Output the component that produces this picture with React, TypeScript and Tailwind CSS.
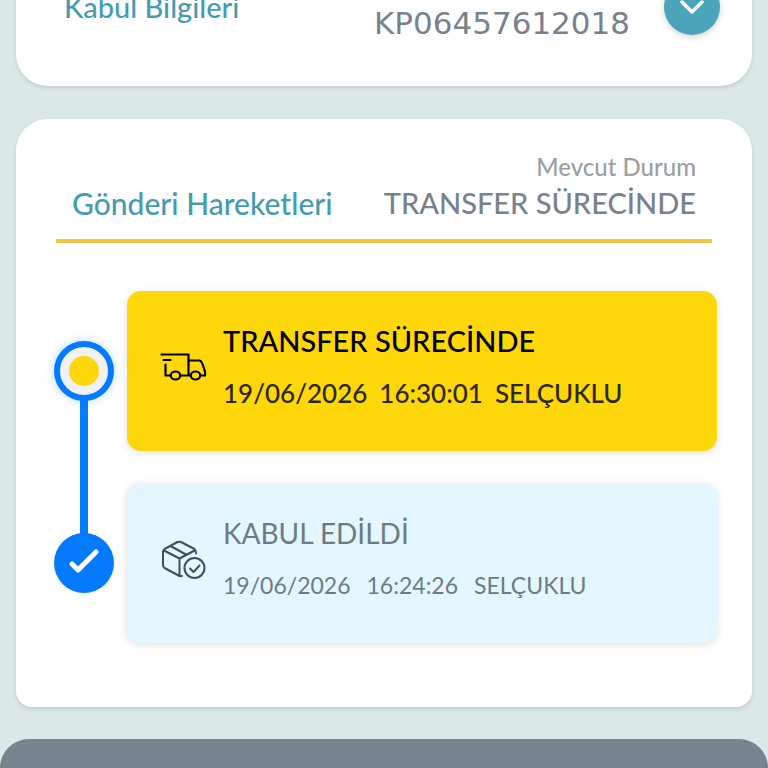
import type { ReactNode } from "react";

type Movement = {
  title: string;
  date: string;
  time: string;
  place: string;
  current: boolean;
};

const movements: Movement[] = [
  { title: "TRANSFER SÜRECİNDE", date: "19/06/2026", time: "16:30:01", place: "SELÇUKLU", current: true },
  { title: "KABUL EDİLDİ", date: "19/06/2026", time: "16:24:26", place: "SELÇUKLU", current: false }
];

function TruckIcon() {
  return (
    <svg viewBox="0 0 48 32" className="h-8 w-12" fill="none" stroke="currentColor" strokeWidth="2.200" strokeLinecap="round" strokeLinejoin="round" aria-hidden="true">
      <path d="M2.500 3.500H29.500V24.500M4.500 9H11.500M6.500 13.500V24.500H11.500M21 24.500H31M29.500 9.500H40C42 9.500 42.800 11 43.500 13L45.500 19Q46.500 21 46 24.500H41.500" />
      <ellipse cx="16.500" cy="24.500" rx="4.700" ry="4" />
      <ellipse cx="36.500" cy="24.500" rx="4.700" ry="4" />
    </svg>
  );
}

function BoxIcon() {
  return (
    <svg viewBox="0 0 48 44" className="h-11 w-12" fill="none" stroke="currentColor" strokeWidth="2" strokeLinecap="round" strokeLinejoin="round" aria-hidden="true">
      <path d="M23 39L20.500 39L5.500 31Q4 30 4 28V15Q4 13 5.500 12L18.500 5Q20.500 4.300 22 5L35.500 12Q37 13 37 16.500M5 13.500L20.500 21.500L35.500 13.500M20.500 21.500V39M11.500 9L27 17.500" />
      <circle cx="35.500" cy="31" r="10" />
      <path d="M31 31.500L34.500 35L40.500 28.500" />
    </svg>
  );
}

function Card({ className, children }: { className: string; children: ReactNode }) {
  return <section className={`mx-4 bg-white shadow-[0_2px_4px_rgba(0,0,0,0.12)] ${className}`}>{children}</section>;
}

function MovementItem({ item }: { item: Movement }) {
  return (
    <li className="relative flex items-center gap-[13px]">
      {item.current && <span className="absolute top-1/2 left-[26px] h-[192px] w-2 bg-[#047bfe]" />}
      {item.current ? (
        <span className="relative flex size-[60px] shrink-0 items-center justify-center rounded-full border-[6px] border-[#047bfe] bg-[#f1f1f1] shadow-[0_0_10px_rgba(4,123,254,0.3)]">
          <span className="size-[30px] rounded-full bg-[#fdd60b]" />
        </span>
      ) : (
        <span className="relative flex size-[60px] shrink-0 items-center justify-center rounded-full bg-[#047bfe] text-white">
          <svg viewBox="0 0 32 32" className="mb-1 size-8" fill="none" stroke="currentColor" strokeWidth="5" strokeLinecap="round" strokeLinejoin="round" aria-hidden="true">
            <path d="M4 19L10 25L28 7" />
          </svg>
        </span>
      )}
      <div
        className={`flex h-40 grow items-center gap-4 rounded-[14px] pl-8 shadow-[0_2px_8px_rgba(0,0,0,0.13)] ${
          item.current ? "bg-[#fed70a] text-black" : "bg-[#e4f6ff] text-[#6c7b84]"
        }`}
      >
        <span className={item.current ? "pb-2 text-black" : "pb-2 text-[#40505a]"}>{item.current ? <TruckIcon /> : <BoxIcon />}</span>
        <div className="pb-2">
          <h3 className={`leading-9 ${item.current ? "text-[29px] font-medium" : "text-[28px] font-normal"}`}>{item.title}</h3>
          <p className={`mt-4 flex leading-9 ${item.current ? "gap-3 text-[26px] font-medium text-[#2e2710]" : "gap-4 text-[23px]"}`}>
            <span>{item.date}</span>
            <span>{item.time}</span>
            <span>{item.place}</span>
          </p>
        </div>
      </div>
    </li>
  );
}

export default function App() {
  return (
    <main className="flex h-screen flex-col overflow-hidden bg-[#dbe8e8] font-['Lato','Noto_Sans',sans-serif]">
      <Card className="-mt-8 shrink-0 rounded-b-[32px] pt-[11px] pr-8 pb-[51px] pl-12">
        <div className="flex h-14 items-center">
          <h2 className="text-[29px] leading-9 font-medium text-[#459caf]">Kabul Bilgileri</h2>
          <p className="mt-8 ml-auto font-['DejaVu_Sans','Noto_Sans',sans-serif] text-[31px] leading-9 text-[#77828c]">KP06457612018</p>
          <button
            type="button"
            aria-label="Kabul bilgilerini aç"
            className="ml-[34px] flex size-14 items-center justify-center rounded-full bg-[#4ba5ba] text-white shadow-[0_2px_6px_rgba(0,0,0,0.18)]"
          >
            <svg viewBox="0 0 24 24" className="size-6" fill="none" stroke="currentColor" strokeWidth="3.500" strokeLinecap="round" strokeLinejoin="round" aria-hidden="true">
              <path d="M2 7L12 17L22 7" />
            </svg>
          </button>
        </div>
      </Card>

      <Card className="mt-[33px] shrink-0 rounded-t-[32px] rounded-b-[16px] pt-8 pb-16">
        <header className="mx-10 flex items-end justify-between border-b-4 border-[#f0c848] px-4 pb-[18px]">
          <h2 className="text-[30px] leading-9 font-medium text-[#459caf]">Gönderi Hareketleri</h2>
          <div className="text-right">
            <p className="text-[24px] leading-8 font-medium text-[#9c9fa2]">Mevcut Durum</p>
            <p className="mt-0.5 text-[29px] leading-9 font-medium text-[#77828c]">TRANSFER SÜRECİNDE</p>
          </div>
        </header>
        <ol className="mt-12 flex flex-col gap-8 pr-[35px] pl-[38px]">
          {movements.map((item) => (
            <MovementItem key={item.time} item={item} />
          ))}
        </ol>
      </Card>

      <footer className="mt-8 grow rounded-t-[32px] bg-[#77838d]" />
    </main>
  );
}
